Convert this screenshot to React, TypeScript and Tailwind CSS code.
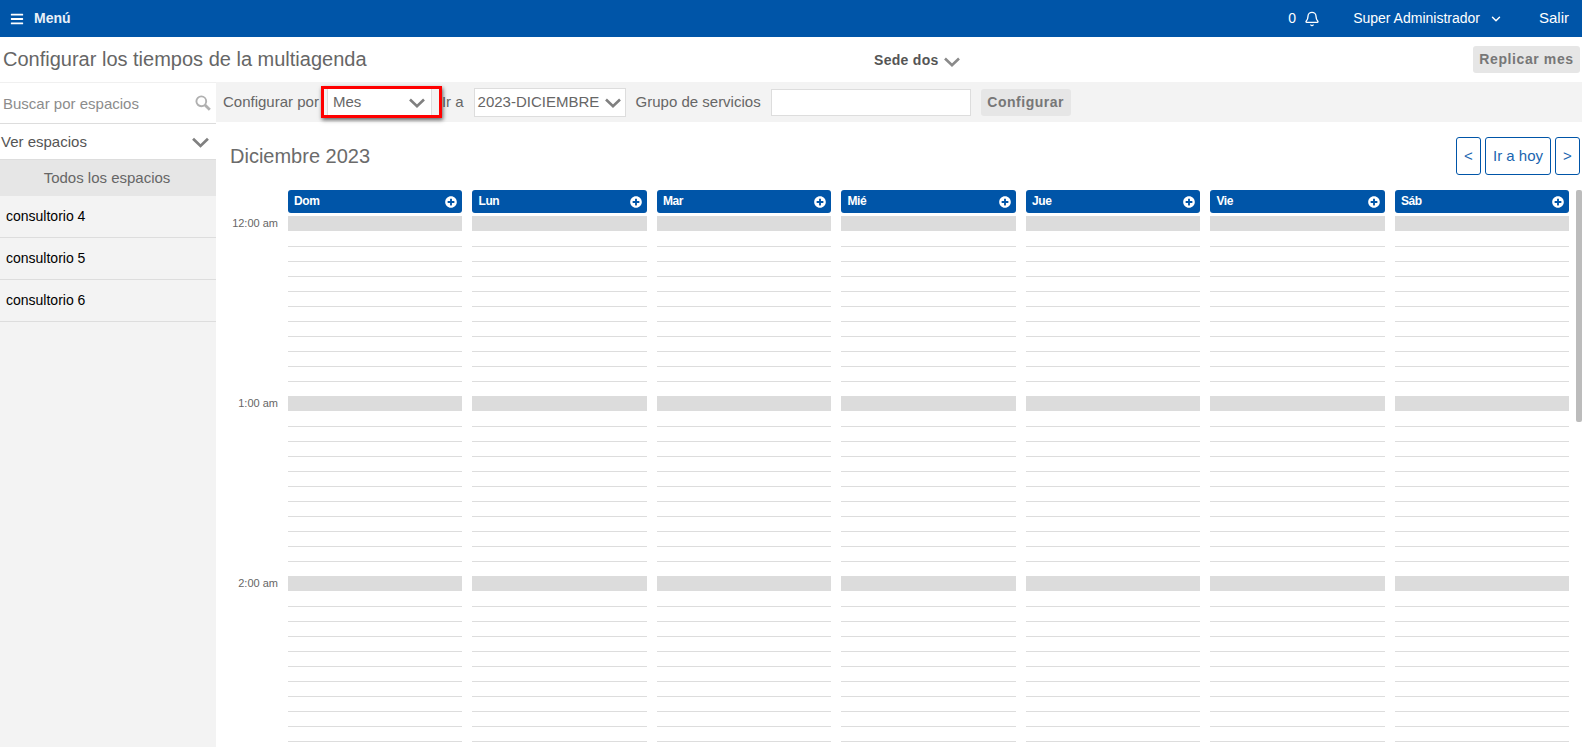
import { Bell, ChevronDown } from "lucide-react";
import { FaBars, FaPlusCircle } from "react-icons/fa";

function Chevron({ className }: { className: string }) {
  return (
    <svg viewBox="0 0 16 10" className={className} fill="none" stroke="currentColor" strokeWidth="2.6">
      <path d="M1 1.5 8 8.2 15 1.5" />
    </svg>
  );
}

function SearchGlyph({ className }: { className: string }) {
  return (
    <svg viewBox="0 0 16 16" className={className} fill="none" stroke="currentColor">
      <circle cx="6.3" cy="6.3" r="4.9" strokeWidth="1.9" />
      <path d="M10 10 14.8 14.8" strokeWidth="2.8" />
    </svg>
  );
}

const days = ["Dom", "Lun", "Mar", "Mié", "Jue", "Vie", "Sáb"];
const hours = ["12:00 am", "1:00 am", "2:00 am"];
const spaces = ["consultorio 4", "consultorio 5", "consultorio 6"];
const lines = [0, 1, 2, 3, 4, 5, 6, 7, 8, 9];

function HourColumn() {
  return (
    <div>
      {hours.map((h) => (
        <div key={h} className="h-[180px]">
          <div className="h-[30px]">
            <div className="h-[15px] bg-[#dcdcdc]" />
          </div>
          {lines.map((l) => (
            <div key={l} className="h-[15px] border-t border-[#dddddd]" />
          ))}
        </div>
      ))}
    </div>
  );
}

export default function App() {
  return (
    <div className="h-[747px] w-[1582px] overflow-hidden bg-white font-['Liberation_Sans',Arial,sans-serif] flex flex-col">
      <header className="h-[37px] shrink-0 bg-[#0055a8] text-white flex items-center text-[14px]">
        <FaBars className="ml-[10px] mr-[10px] h-[14px] w-[14px]" />
        <span className="font-bold text-[#e8f0f8]">Menú</span>
        <div className="ml-auto flex items-center">
          <span>0</span>
          <Bell className="ml-[8px] h-[16px] w-[16px]" strokeWidth={2} />
          <span className="ml-[33px]">Super Administrador</span>
          <ChevronDown className="ml-[9px] h-[14px] w-[14px]" strokeWidth={2.5} />
          <span className="ml-[36px] mr-[13px] text-[15px]">Salir</span>
        </div>
      </header>

      <div className="h-[45px] shrink-0 relative flex items-center justify-between pl-[3px] pr-[2px]">
        <h1 className="-mt-[2px] text-[20px] text-[#666666] leading-none">Configurar los tiempos de la multiagenda</h1>
        <div className="absolute left-[874px] top-[13px] flex items-center text-[14px] font-bold text-[#555555] tracking-[0.3px]">
          Sede dos
          <Chevron className="ml-[5px] mt-[2px] h-[10px] w-[16px] text-[#8a8a8a]" />
        </div>
        <button className="h-[27px] w-[107px] rounded-[3px] bg-[#e6e6e6] text-[14px] font-bold text-[#777777] tracking-[0.6px]">Replicar mes</button>
      </div>

      <div className="flex flex-1 min-h-0">
        <aside className="w-[216px] shrink-0 bg-[#f3f3f3] flex flex-col">
          <div className="h-[41px] bg-white flex items-center pl-[3px] pr-[5px] pt-[2px] border-t border-[#f0f0f0]">
            <span className="text-[15px] text-[#8c8c8c]">Buscar por espacios</span>
            <SearchGlyph className="ml-auto -mt-[2px] h-[16px] w-[16px] text-[#b0b0b0]" />
          </div>
          <div className="h-[37px] bg-white flex items-center pl-[1px] pr-[7px] pt-[1px] border-y border-[#dddddd] text-[15px] text-[#555555]">
            Ver espacios
            <Chevron className="ml-auto h-[11px] w-[17px] text-[#808080]" />
          </div>
          <div className="h-[36px] bg-[#e6e6e6] flex items-center justify-center pr-[2px] text-[15px] text-[#666666]">Todos los espacios</div>
          {spaces.map((s) => (
            <div key={s} className="h-[42px] pl-[6px] flex items-center border-b border-[#dddddd] text-[14px] text-black">
              {s}
            </div>
          ))}
        </aside>

        <main className="flex-1 min-w-0 flex flex-col">
          <div className="relative h-[40px] shrink-0 bg-[#f3f3f3] flex items-center text-[15px] text-[#666666]">
            <span className="ml-[7px] pt-[1px]">Configurar por</span>
            <div className="ml-[8px] h-[29px] w-[105px] bg-white border border-[#dddddd] flex items-center pl-[5px] pr-[6px] pt-[1px]">
              Mes
              <Chevron className="ml-auto h-[10px] w-[16px] text-[#808080]" />
            </div>
            <span className="ml-[10px] pt-[1px]">Ir a</span>
            <div className="ml-[10px] h-[29px] w-[152px] bg-white border border-[#dddddd] flex items-center pl-[3px] pr-[4px] pt-[1px]">
              2023-DICIEMBRE
              <Chevron className="ml-auto h-[10px] w-[16px] text-[#808080]" />
            </div>
            <span className="ml-[10px] pt-[1px]">Grupo de servicios</span>
            <input className="ml-[10px] h-[27px] w-[200px] bg-white border border-[#dddddd]" />
            <button className="ml-[10px] h-[27px] w-[90px] rounded-[3px] bg-[#e6e6e6] pt-[1px] text-[14px] font-bold text-[#777777] tracking-[0.5px]">Configurar</button>
            <div className="absolute left-[105px] top-[4px] h-[32px] w-[121px] border-[3px] border-[#ff0000] shadow-[1px_2px_4px_rgba(0,0,0,0.6)]" />
          </div>

          <div className="h-[68px] shrink-0 flex items-start pl-[14px] pr-[2px]">
            <h2 className="mt-[23px] text-[20px] leading-[23px] text-[#6b6b6b]">Diciembre 2023</h2>
            <div className="ml-auto mt-[15px] flex gap-[4px] text-[15px] text-[#1a65b0]">
              <button className="h-[38px] w-[25px] rounded-[3px] border border-[#0055a8]">&lt;</button>
              <button className="h-[38px] w-[66px] rounded-[3px] border border-[#0055a8]">Ir a hoy</button>
              <button className="h-[38px] w-[25px] rounded-[3px] border border-[#0055a8]">&gt;</button>
            </div>
          </div>

          <div className="flex flex-1 min-h-0 overflow-hidden">
            <div className="w-[72px] shrink-0 pt-[26px]">
              {hours.map((h) => (
                <div key={h} className="h-[180px] pr-[10px] text-right text-[11px] leading-[15px] text-[#666666]">
                  {h}
                </div>
              ))}
            </div>
            <div className="w-[1281px] shrink-0 grid grid-cols-7 gap-x-[10.49px] content-start">
              {days.map((d) => (
                <div key={d}>
                  <div className="h-[23px] rounded-[3px] bg-[#0055a8] text-white flex items-center justify-between pl-[6px] pr-[5px] text-[12px] font-bold mb-[3px]">
                    <span className="-mt-[1px] tracking-[-0.4px]">{d}</span>
                    <FaPlusCircle className="h-[12px] w-[12px]" />
                  </div>
                  <HourColumn />
                </div>
              ))}
            </div>
            <div className="ml-[7px] w-[6px] shrink-0">
              <div className="h-[232px] rounded-[2px] bg-[#bcbcbc]" />
            </div>
          </div>
        </main>
      </div>
    </div>
  );
}
